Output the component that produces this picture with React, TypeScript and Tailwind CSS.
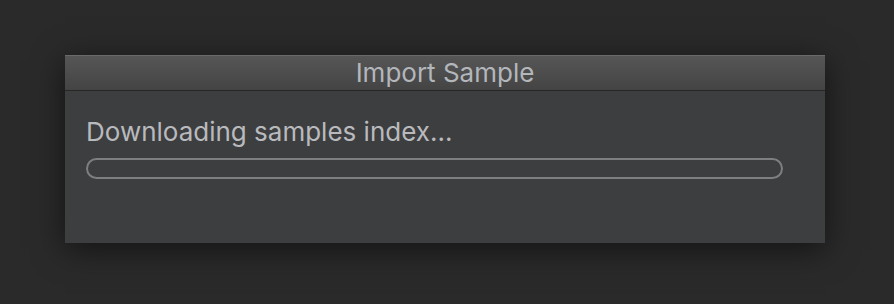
export default function App() {
  return (
    <div className="w-full h-[304px] bg-[#2a2a2a] flex justify-start pt-[55px] pl-[65px]" style={{ fontFamily: 'Inter, "Liberation Sans", sans-serif' }}>
      <div className="w-[760px] h-[188px] flex flex-col shadow-[0_6px_30px_rgba(0,0,0,0.55)]">
        {/* title bar */}
        <div className="h-[36px] flex items-center justify-center bg-gradient-to-b from-[#565656] to-[#444444] border-t border-t-[#6a6a6a] border-b border-b-[#262626]">
          <span className="text-[26px] text-[#b3b6bb] leading-none">Import Sample</span>
        </div>
        {/* body */}
        <div className="flex-1 bg-[#3d3e40] px-[21px] pt-[28px]">
          <p className="text-[26px] text-[#b9babd] leading-none">Downloading samples index...</p>
          <div className="mt-[13px] w-[697px] h-[21px] rounded-full border-2 border-[#7e7f81]" />
        </div>
      </div>
    </div>
  );
}
